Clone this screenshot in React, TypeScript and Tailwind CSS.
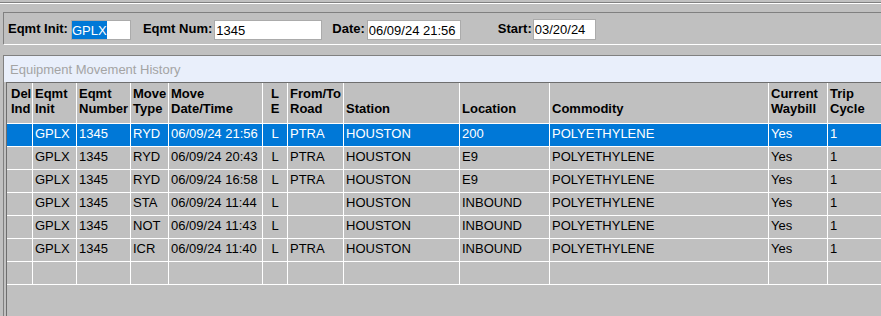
type Move = {
  type: string;
  when: string;
  road: string;
  location: string;
};

const MOVES: Move[] = [
  { type: 'RYD', when: '06/09/24 21:56', road: 'PTRA', location: '200' },
  { type: 'RYD', when: '06/09/24 20:43', road: 'PTRA', location: 'E9' },
  { type: 'RYD', when: '06/09/24 16:58', road: 'PTRA', location: 'E9' },
  { type: 'STA', when: '06/09/24 11:44', road: '', location: 'INBOUND' },
  { type: 'NOT', when: '06/09/24 11:43', road: '', location: 'INBOUND' },
  { type: 'ICR', when: '06/09/24 11:40', road: 'PTRA', location: 'INBOUND' },
];

const HEADERS: [string, string][] = [
  ['Del', 'Ind'],
  ['Eqmt', 'Init'],
  ['Eqmt', 'Number'],
  ['Move', 'Type'],
  ['Move', 'Date/Time'],
  ['L', 'E'],
  ['From/To', 'Road'],
  ['', 'Station'],
  ['', 'Location'],
  ['', 'Commodity'],
  ['Current', 'Waybill'],
  ['Trip', 'Cycle'],
];

function Field({ label, value, labelGap, gap, width, selected, lift }: {
  label: string;
  value: string;
  labelGap: string;
  gap: string;
  width: string;
  selected?: boolean;
  lift?: boolean;
}) {
  return (
    <div className={`flex items-start ${labelGap}`}>
      <span className="pt-[1px] font-bold leading-[15px] text-black">{label}</span>
      <div className={`${gap} ${width} ${lift ? '-mt-[1px] h-[21px]' : 'h-[20px]'} border border-[#ababab] bg-white`}>
        {selected ? (
          <span className="inline-block h-[18px] bg-[#0078d7] pt-[2px] leading-[15px] text-white">{value}</span>
        ) : (
          <span className="block pl-[1px] pt-[2px] leading-[15px] text-black">{value}</span>
        )}
      </div>
    </div>
  );
}

export default function App() {
  return (
    <div className="h-[316px] w-[881px] overflow-hidden bg-[#c0c0c0] pt-[2px] font-['Liberation_Sans',Arial,sans-serif] text-[13px]">
      <div className="h-px bg-[#808080]" />
      <div className="h-px bg-white" />

      {/* Search fields */}
      <div className="ml-[3px] mt-[8px] h-[33px] w-[900px] border-l border-t border-b border-[#808080] border-b-white pl-[4px] pt-[7px]">
        <div className="flex items-start">
          <Field label="Eqmt Init:" value="GPLX" labelGap="" gap="ml-[3px]" width="w-[60px]" selected />
          <Field label="Eqmt Num:" value="1345" labelGap="ml-[12px]" gap="ml-[2px]" width="w-[108px]" />
          <Field label="Date:" value="06/09/24 21:56" labelGap="ml-[10px]" gap="ml-[2px]" width="w-[94px]" />
          <Field label="Start:" value="03/20/24" labelGap="ml-[37px]" gap="ml-[1px]" width="w-[63px]" lift />
        </div>
      </div>

      {/* Movement history panel */}
      <div className="ml-[3px] mt-[10px] h-[300px] w-[900px] border-l border-t border-[#808080]">
        <div className="h-[26px] bg-[#e9effb] pl-[6px] pt-[6px] leading-[15px] text-[#a4a4a4]">
          Equipment Movement History
        </div>
        <div className="h-full pl-[2px]">
          <div className="h-full border-l border-t border-[#6e6e6e]">
            <div className="grid grid-cols-[25px_43px_53px_37px_93px_24px_55px_115px_89px_218px_58px_80px] gap-px border-b border-white bg-white">
              {HEADERS.map(([a, b], i) => (
                <div
                  key={b}
                  className={`flex h-[40px] flex-col justify-end bg-[#c0c0c0] pb-[7px] font-bold leading-[15px] text-black ${
                    i === 0 ? 'pl-[4px]' : i === 5 ? 'items-center' : 'pl-[2px]'
                  }`}
                >
                  {a && <span>{a}</span>}
                  <span>{b}</span>
                </div>
              ))}

              {MOVES.map((m, r) => {
                const cells = ['', 'GPLX', '1345', m.type, m.when, 'L', m.road, 'HOUSTON', m.location, 'POLYETHYLENE', 'Yes', '1'];
                const sel = r === 0;
                return cells.map((c, i) => (
                  <div
                    key={`${r}-${i}`}
                    className={`h-[22px] whitespace-nowrap pt-[2px] leading-[15px] ${
                      sel ? 'bg-[#0078d7] text-white' : 'bg-[#c0c0c0] text-black'
                    } ${i === 5 ? 'text-center' : 'pl-[2px]'}`}
                  >
                    {c}
                  </div>
                ));
              })}

              {HEADERS.map((_, i) => (
                <div key={`empty-${i}`} className="h-[22px] bg-[#c0c0c0]" />
              ))}
            </div>
          </div>
        </div>
      </div>
    </div>
  );
}
